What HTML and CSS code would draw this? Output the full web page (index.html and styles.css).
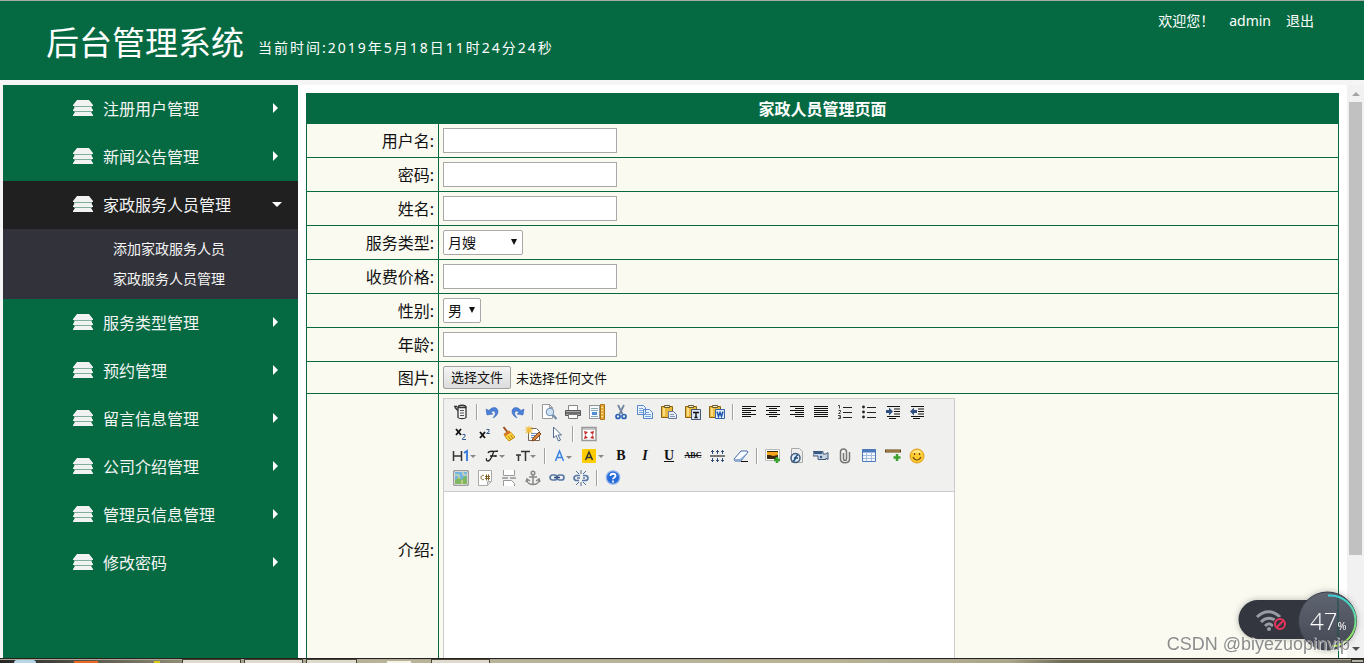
FILE: index.html
```html
<!DOCTYPE html>
<html lang="zh-CN">
<head>
<meta charset="utf-8">
<title>后台管理系统</title>
<link rel="stylesheet" href="styles.css">
</head>
<body>
<svg class="sprite" aria-hidden="true">
  <symbol id="stack" viewBox="0 0 20 17"><path fill="#7fae98" d="M1 5h18v7H1z"/><path fill="#f2f2f2" d="M4 0h12l4 5v1H0V5zM2 7h16l2 3v1H0v-1zM2 12h16l2 3v1H0v-1z"/></symbol>
  <symbol id="clip" viewBox="0 0 16 16"><path d="M.5 2.500h11v11H.5z" fill="#e9b93c" stroke="#8a6414"/><path d="M2 4h2v8H2z" fill="#f9dc83"/><path d="M3.500 1.500h5v2h-5z" fill="#f5edc8" stroke="#6b5a2c"/></symbol>
</svg>
<header class="topbar">
  <h1 class="brand">后台管理系统</h1>
  <p class="clock">当前时间:2019年5月18日11时24分24秒</p>
  <div class="user"><span class="hello">欢迎您！</span><span>admin</span><a href="#">退出</a></div>
</header>
<main class="layout">
  <nav class="menu">
    <a class="item" href="#"><svg class="stack"><use href="#stack"/></svg><span>注册用户管理</span><i class="arrow"></i></a>
    <a class="item" href="#"><svg class="stack"><use href="#stack"/></svg><span>新闻公告管理</span><i class="arrow"></i></a>
    <a class="item open" href="#"><svg class="stack"><use href="#stack"/></svg><span>家政服务人员管理</span><i class="arrow"></i></a>
    <div class="submenu"><a href="#">添加家政服务人员</a><a href="#">家政服务人员管理</a></div>
    <a class="item" href="#"><svg class="stack"><use href="#stack"/></svg><span>服务类型管理</span><i class="arrow"></i></a>
    <a class="item" href="#"><svg class="stack"><use href="#stack"/></svg><span>预约管理</span><i class="arrow"></i></a>
    <a class="item" href="#"><svg class="stack"><use href="#stack"/></svg><span>留言信息管理</span><i class="arrow"></i></a>
    <a class="item" href="#"><svg class="stack"><use href="#stack"/></svg><span>公司介绍管理</span><i class="arrow"></i></a>
    <a class="item" href="#"><svg class="stack"><use href="#stack"/></svg><span>管理员信息管理</span><i class="arrow"></i></a>
    <a class="item" href="#"><svg class="stack"><use href="#stack"/></svg><span>修改密码</span><i class="arrow"></i></a>
  </nav>
  <form class="content">
    <table class="form">
      <thead><tr><th class="title" colspan="2">家政人员管理页面</th></tr></thead>
      <tbody>
      <tr><th class="label"><label for="user">用户名:</label></th><td><input class="text" id="user" type="text"></td></tr>
      <tr><th class="label"><label for="pass">密码:</label></th><td><input class="text" id="pass" type="text"></td></tr>
      <tr><th class="label"><label for="name">姓名:</label></th><td><input class="text" id="name" type="text"></td></tr>
      <tr><th class="label"><label for="type">服务类型:</label></th><td><span class="pick wide"><select id="type"><option>月嫂</option></select></span></td></tr>
      <tr><th class="label"><label for="price">收费价格:</label></th><td><input class="text" id="price" type="text"></td></tr>
      <tr><th class="label"><label for="sex">性别:</label></th><td><span class="pick"><select id="sex"><option>男</option></select></span></td></tr>
      <tr><th class="label"><label for="age">年龄:</label></th><td><input class="text" id="age" type="text"></td></tr>
      <tr><th class="label"><label for="photo">图片:</label></th><td><div class="file"><input id="photo" type="file"><label class="choose" for="photo">选择文件</label><span>未选择任何文件</span></div></td></tr>
      <tr><th class="label"><label for="intro">介绍:</label></th><td>
        <div class="editor">
          <div class="tools">
            <div class="row">
              <button type="button" class="tool" aria-label="HTML代码"><svg viewBox="0 0 16 16"><path d="M5 3.500h8v10c-1 1.500-7 1.500-8 0z" fill="#f4f4f4" stroke="#333" stroke-width="1.300"/><path d="M7 6.500h4M7 9h4M7 11.500h4" stroke="#555"/><path d="M1 2.500h3M2 3.500l3 3M5 3.500c0-3 8-3 8 0" fill="none" stroke="#333" stroke-width="1.500"/></svg></button><i class="sep"></i>
              <button type="button" class="tool" aria-label="后退"><svg viewBox="0 0 16 16"><path d="M4 6.500c4-5 9-3 9 1 0 3-2 5-5 6.500 2-3 3-4 2-6-1-2-3-1-4 1l2 1-6 1-1-6z" fill="#4b80d8" stroke="#2859ae" stroke-width=".5"/></svg></button>
              <button type="button" class="tool" aria-label="前进"><svg viewBox="0 0 16 16"><path d="M12 6.500c-4-5-9-3-9 1 0 3 2 5 5 6.500-2-3-3-4-2-6 1-2 3-1 4 1l-2 1 6 1 1-6z" fill="#4b80d8" stroke="#2859ae" stroke-width=".5"/></svg></button><i class="sep"></i>
              <button type="button" class="tool" aria-label="预览"><svg viewBox="0 0 16 16"><path d="M1.500.5h7l3 3v11h-10z" fill="#fff" stroke="#999"/><path d="M8.500.5v3h3" fill="none" stroke="#999"/><circle cx="9" cy="8" r="3.800" fill="#cfe2f5" stroke="#6d8db3"/><path d="M12 11l3.500 4" stroke="#7189a6" stroke-width="2"/></svg></button>
              <button type="button" class="tool" aria-label="打印"><svg viewBox="0 0 16 16"><path d="M3.500 1.500h9v5h-9z" fill="#fff" stroke="#888"/><path d="M.5 6.500h15v5H.5z" fill="#aaa" stroke="#555"/><path d="M1 9h14" stroke="#333"/><path d="M3.500 10.500h9v4h-9z" fill="#fff" stroke="#777"/></svg></button>
              <button type="button" class="tool" aria-label="插入模板"><svg viewBox="0 0 16 16"><path d="M.5 1.500h10v13H.5z" fill="#f5f9ff" stroke="#333" stroke-dasharray="1 1"/><path d="M2 4.500h7M2 6.500h7M2 12.500h7" stroke="#8aa"/><path d="M3 8h5v3H3z" fill="#4d8fd4"/><path d="M11.500.5h4v15h-4z" fill="#e6a93a" stroke="#ad7410"/><path d="M12 3.500h2M12 6.500h2M12 9.500h2M12 12.500h2" stroke="#ffe29a"/></svg></button>
              <button type="button" class="tool" aria-label="剪切"><svg viewBox="0 0 16 16"><path d="M5 1l4.500 9M11 1L6.500 10" stroke="#7487a2" stroke-width="1.800"/><circle cx="5" cy="12.500" r="2" fill="none" stroke="#2b62b4" stroke-width="1.700"/><circle cx="11" cy="12.500" r="2" fill="none" stroke="#2b62b4" stroke-width="1.700"/></svg></button>
              <button type="button" class="tool" aria-label="复制"><svg viewBox="0 0 16 16"><path d="M.5 1.500h6l2 2v7h-8zM6.500 5.500h6l3 3v6h-9z" fill="#e9f2ff" stroke="#5586cc"/><path d="M2 4.500h4M2 6.500h4M2 8.500h4M8 8.500h4M8 10.500h6M8 12.500h6" stroke="#7ba5dd"/></svg></button>
              <button type="button" class="tool" aria-label="粘贴"><svg viewBox="0 0 16 16"><use href="#clip"/><path d="M7.500 7.500h5l3 3v4h-8z" fill="#e8eef8" stroke="#64779a"/><path d="M9 10.500h4M9 12.500h5" stroke="#8396b5"/></svg></button>
              <button type="button" class="tool" aria-label="粘贴为无格式文本"><svg viewBox="0 0 16 16"><use href="#clip"/><path d="M6.500 5.500h9v10h-9z" fill="#dbe4f2" stroke="#42546f"/><path d="M8 8.500h6M11 8v6M9.500 13.500h3" stroke="#111" stroke-width="1.400"/></svg></button>
              <button type="button" class="tool" aria-label="从Word粘贴"><svg viewBox="0 0 16 16"><use href="#clip"/><path d="M6.500 5.500h9v9h-9z" fill="#e5f0ff" stroke="#3465a9"/><path d="M8 7.500l1.500 5 1.500-4 1.500 4 1.500-5" fill="none" stroke="#2157aa" stroke-width="1.500"/></svg></button><i class="sep"></i>
              <button type="button" class="tool" aria-label="左对齐"><svg viewBox="0 0 16 16"><path d="M1 2.500h14M1 4.500h9M1 6.500h14M1 8.500h9M1 10.500h14M1 12.500h9" stroke="#111"/></svg></button>
              <button type="button" class="tool" aria-label="居中"><svg viewBox="0 0 16 16"><path d="M1 2.500h14M4 4.500h8M1 6.500h14M4 8.500h8M1 10.500h14M4 12.500h8" stroke="#111"/></svg></button>
              <button type="button" class="tool" aria-label="右对齐"><svg viewBox="0 0 16 16"><path d="M1 2.500h14M6 4.500h9M1 6.500h14M6 8.500h9M1 10.500h14M6 12.500h9" stroke="#111"/></svg></button>
              <button type="button" class="tool" aria-label="两端对齐"><svg viewBox="0 0 16 16"><path d="M1 2.500h14M1 4.500h14M1 6.500h14M1 8.500h14M1 10.500h14M1 12.500h14" stroke="#111"/></svg></button>
              <button type="button" class="tool" aria-label="编号"><svg viewBox="0 0 16 16"><path d="M6 3.500h9M6 8.500h9M6 13.500h9" stroke="#222"/><path d="M1 1.500h1.500v3M1.500 6.500h2v1.500l-2 1.500h2M1 11.500h2.500v3H1M2 13h1" fill="none" stroke="#444"/></svg></button>
              <button type="button" class="tool" aria-label="项目符号"><svg viewBox="0 0 16 16"><path d="M6 3.500h9M6 8.500h9M6 13.500h9" stroke="#222"/><circle cx="2.500" cy="3" r="1.400" fill="#222"/><circle cx="2.500" cy="8" r="1.400" fill="#222"/><circle cx="2.500" cy="13" r="1.400" fill="#222"/></svg></button>
              <button type="button" class="tool" aria-label="增加缩进"><svg viewBox="0 0 16 16"><path d="M2 2.500h13M9 5h6M9 7.500h6M9 10h6M2 12.500h13M4 14.500h7" stroke="#111"/><path d="M1 6h3V3.500L8 7.500l-4 4V9H1z" fill="#30517f"/></svg></button>
              <button type="button" class="tool" aria-label="减少缩进"><svg viewBox="0 0 16 16"><path d="M2 2.500h13M9 5h6M9 7.500h6M9 10h6M2 12.500h13M4 14.500h7" stroke="#111"/><path d="M8 6H5V3.500L1 7.500l4 4V9h3z" fill="#30517f"/></svg></button>
            </div>
            <div class="row">
              <button type="button" class="tool" aria-label="下标"><svg viewBox="0 0 16 16"><path d="M3 3l5 6M8 3L3 9" stroke="#111" stroke-width="1.800"/><path d="M9.500 8.500h2.500v2l-2.500 2v1h3.500" fill="none" stroke="#2e5a8e"/></svg></button>
              <button type="button" class="tool" aria-label="上标"><svg viewBox="0 0 16 16"><path d="M3 6l5 6M8 6l-5 6" stroke="#111" stroke-width="1.800"/><path d="M9.500 3.500h2.500v2l-2.500 2h3.500" fill="none" stroke="#2e5a8e"/></svg></button>
              <button type="button" class="tool" aria-label="清理格式"><svg viewBox="0 0 16 16"><path d="M2.500 1l4 5" stroke="#a04f1c" stroke-width="2"/><path d="M3 8l5-3c2 1 4 4 6 6l-6 4c-2-2-4-4-5-7z" fill="#f9d23c" stroke="#c58c10"/><path d="M3.500 8l4.500-3 1.500 1.500-5 3.500z" fill="#d86933"/><path d="M7 10l3 4M9.500 9l2.500 3.500" stroke="#b58416"/></svg></button>
              <button type="button" class="tool" aria-label="一键排版"><svg viewBox="0 0 16 16"><path d="M3.500 2.500h8l3 3v9h-11z" fill="#fff" stroke="#776655"/><path d="M6 7.500h7M6 9.500h5M6 11.500h4" stroke="#6b92c3"/><path d="M4 0v8M0 4h8M1 1l6 6M7 1L1 7" stroke="#f2bd36" stroke-width="1.200"/><path d="M14 6l2 2-6 6-3 1 1-3z" fill="#d9843e" stroke="#864722"/></svg></button>
              <button type="button" class="tool" aria-label="全选"><svg viewBox="0 0 16 16"><path d="M4.500 1v11L7 9.500 9.500 15l2-1L9 9h3.500z" fill="#fff" stroke="#536d92"/></svg></button><i class="sep"></i>
              <button type="button" class="tool" aria-label="全屏显示"><svg viewBox="0 0 16 16"><path d="M1 1.500h14v13H1z" fill="#fff" stroke="#999" stroke-width="1.500"/><path d="M1 3h14" stroke="#999"/><path d="M3 5l4 1-3 3zM13 5L9 6l3 3zM3 13l4-1-3-3zM13 13l-4-1 3-3z" fill="#c62d2d"/></svg></button>
            </div>
            <div class="row">
              <button type="button" class="tool head" aria-label="段落"><svg viewBox="0 0 26 16"><path d="M1.500 3v10M9.500 3v10M2 8h7" stroke="#333" stroke-width="1.500"/><path d="M12 5l3-2v10" fill="none" stroke="#3077d8" stroke-width="1.800"/><path d="M18 7h6l-3 3z" fill="#888"/></svg></button>
              <button type="button" class="tool drop" aria-label="字体"><svg viewBox="0 0 26 16"><path d="M5 5c1-3 6-1 10-2M11 3c-2 5-3 10-6 10-2 0-2-2-1-2.500M7 8h6M13 7v2" fill="none" stroke="#222" stroke-width="1.300"/><path d="M16 7h6l-3 3z" fill="#888"/></svg></button>
              <button type="button" class="tool drop" aria-label="文字大小"><svg viewBox="0 0 26 16"><path d="M3 7h5M5.500 7v6M8 3.500h9M12.500 3v10" stroke="#333" stroke-width="1.500"/><path d="M17 7h6l-3 3z" fill="#888"/></svg></button><i class="sep"></i>
              <button type="button" class="tool drop" aria-label="文字颜色"><svg viewBox="0 0 26 16"><path d="M4.500 13l4-10 4 10M6 9.500h5" fill="none" stroke="#3983e5" stroke-width="1.500"/><path d="M15 8h6l-3 3z" fill="#888"/></svg></button>
              <button type="button" class="tool drop" aria-label="文字背景"><svg viewBox="0 0 26 16"><rect x="1" y="1" width="14" height="14" rx="1" fill="#fc0"/><path d="M4.500 12L8 4l3.500 8M5.500 9.500h5" fill="none" stroke="#333" stroke-width="1.500"/><path d="M17 7h6l-3 3z" fill="#888"/></svg></button>
              <button type="button" class="tool glyph bold">B</button>
              <button type="button" class="tool glyph italic">I</button>
              <button type="button" class="tool glyph under">U</button>
              <button type="button" class="tool glyph strike">ABC</button>
              <button type="button" class="tool" aria-label="行距"><svg viewBox="0 0 16 16"><path d="M1 8h15" stroke="#777" stroke-width="2"/><path d="M3.500 2v4M8.500 2v4M13.500 2v4M3.500 10v4M8.500 10v4M13.500 10v4M2 3.500h3M7 3.500h3M12 3.500h3M2 12.500h3M7 12.500h3M12 12.500h3" stroke="#314d7a"/></svg></button>
              <button type="button" class="tool" aria-label="删除格式"><svg viewBox="0 0 16 16"><path d="M1 11l7-8h6l1 1-7 9H2z" fill="#f8fbff" stroke="#426ba9"/><path d="M1 11h6l8-7-7 9H2z" fill="#8eacd5"/><path d="M8 13.500h7" stroke="#111"/></svg></button><i class="sep"></i>
              <button type="button" class="tool" aria-label="图片"><svg viewBox="0 0 16 16"><path d="M.5 1.500h14v11H.5z" fill="#fff" stroke="#bbb"/><path d="M2 3h11v8H2z" fill="#f4a51c"/><path d="M2 3h11v1H2zM2 7h3l3 1 5-1v4H2z" fill="#3a2a12"/><path d="M12 9v6M9 12h6" stroke="#3aa12f" stroke-width="2.500"/></svg></button>
              <button type="button" class="tool" aria-label="Flash"><svg viewBox="0 0 16 16"><path d="M2.500.5h8l3 3v11h-11z" fill="#eee" stroke="#aaa"/><circle cx="6.500" cy="10" r="4.500" fill="#dce9f5" stroke="#3d5a79" stroke-width="1.500"/><path d="M9 7c-3 0-2 6-5 6M5 10h4" fill="none" stroke="#254e7d" stroke-width="1.500"/></svg></button>
              <button type="button" class="tool" aria-label="视音频"><svg viewBox="0 0 16 16"><path d="M0 3.500h10V6h3l2-1.500v7L13 10v1.500H5V8H0z" fill="#c8d4e2" stroke="#405a78"/><path d="M1 5h8" stroke="#345a89" stroke-width="2"/><circle cx="8" cy="9" r="1.200" fill="#345a89"/></svg></button>
              <button type="button" class="tool" aria-label="插入文件"><svg viewBox="0 0 16 16"><path d="M6.500 5v6c0 2 3 2 3 0V4c0-4-6-4-6 0v7c0 5 9 5 9 0V4" fill="none" stroke="#777" stroke-width="1.500"/></svg></button>
              <button type="button" class="tool" aria-label="表格"><svg viewBox="0 0 16 16"><path d="M1.500 1.500h13v12h-13z" fill="#f4f8ff" stroke="#4c78bc"/><path d="M1 3h14" stroke="#4c78bc" stroke-width="3"/><path d="M2 7.500h12M2 10.500h12M5.500 4v9M10.500 4v9" stroke="#a6bddf"/></svg></button>
              <button type="button" class="tool" aria-label="横线"><svg viewBox="0 0 16 16"><path d="M0 3h16" stroke="#5d4316" stroke-width="3"/><path d="M1 3h14" stroke="#d8ae61"/><path d="M12 6v7M8.500 9.500h7" stroke="#3aa12f" stroke-width="2.500"/></svg></button>
              <button type="button" class="tool" aria-label="表情"><svg viewBox="0 0 16 16"><circle cx="8" cy="8" r="7" fill="#fccb30" stroke="#e39b1d"/><path d="M3 5c2-4 8-4 10 0" fill="#ffe681"/><path d="M5.500 5v2M10.500 5v2M4 9c2 4 6 4 8 0" fill="none" stroke="#704511" stroke-width="1.200"/></svg></button>
            </div>
            <div class="row">
              <button type="button" class="tool" aria-label="地图"><svg viewBox="0 0 16 16"><path d="M.8.8h14.400v14.400H.8z" fill="#fff" stroke="#777"/><path d="M2 2h12v12H2z" fill="#72b5e7"/><path d="M2 10l4-3 3 3 2-4 3 1v7H2z" fill="#7fb765"/><path d="M2 5h4v4M10 2v3h4M9 10v4" fill="none" stroke="#f3e394"/></svg></button>
              <button type="button" class="tool" aria-label="插入程序代码"><svg viewBox="0 0 16 16"><path d="M1.500.5h13v11l-4 4h-9z" fill="#fff" stroke="#aaa"/><path d="M7 5.500C3 4 3 11 7 9.500M9.500 4.500v6M11.500 4.500v6M8 6.500h5M8 8.500h5" fill="none" stroke="#81601f"/><path d="M10.500 15v-3.500H14" fill="#ddd" stroke="#aaa"/></svg></button>
              <button type="button" class="tool" aria-label="插入分页符"><svg viewBox="0 0 16 16"><path d="M2.500 0v5.500h11V0M2.500 16v-5.500h8l3 3V16" fill="#fff" stroke="#999"/><path d="M1 8h6M9 8h6" stroke="#aaa" stroke-width="2"/></svg></button>
              <button type="button" class="tool" aria-label="锚点"><svg viewBox="0 0 16 16"><circle cx="8" cy="3" r="1.800" fill="none" stroke="#888" stroke-width="1.500"/><path d="M8 5v10M4 7h8M2 10c0 3 3 4.500 6 4.500s6-1.500 6-4.500M1 12l1-3 3 2M15 12l-1-3-3 2" fill="none" stroke="#888" stroke-width="1.500"/></svg></button>
              <button type="button" class="tool" aria-label="超级链接"><svg viewBox="0 0 16 16"><rect x="1" y="5" width="7" height="5" rx="2.500" fill="none" stroke="#5878a8" stroke-width="1.700"/><rect x="8" y="5" width="7" height="5" rx="2.500" fill="none" stroke="#5878a8" stroke-width="1.700"/><path d="M5 7.500h6" stroke="#344f79" stroke-width="1.500"/></svg></button>
              <button type="button" class="tool" aria-label="取消超级链接"><svg viewBox="0 0 16 16"><path d="M7 5.500H4c-4 0-4 5 0 5h2M10 5.500h2c4 0 4 5 0 5H9M4 8h3M10 8h2" fill="none" stroke="#5878a8" stroke-width="1.700"/><path d="M8 0v4M3 1l3 3M13 1l-3 3M8 12v4M3 15l3-3M13 15l-3-3" stroke="#526d94"/></svg></button><i class="sep"></i>
              <button type="button" class="tool" aria-label="关于"><svg viewBox="0 0 16 16"><circle cx="8" cy="7.500" r="6.700" fill="#286bdd" stroke="#8eb2ea" stroke-width="1.300"/><path d="M5.500 6c0-3 5-3 5 0 0 1.500-2.500 1.500-2.500 3.200M8 10.500v2" fill="none" stroke="#fff" stroke-width="1.800"/></svg></button>
            </div>
          </div>
          <textarea id="intro"></textarea>
        </div>
      </td></tr>
      </tbody>
    </table>
  </form>
  <div class="scroll" aria-hidden="true"><i class="up"></i><i class="thumb"></i><i class="down"></i></div>
</main>
<footer class="taskbar"><i class="orb"></i><i class="orange"></i><i class="yellow"></i><i class="win first"></i><i class="win"></i><i class="win short"></i><i class="light"></i><i class="win"></i><i class="desk"></i></footer>
<aside class="meter">
  <svg viewBox="0 0 120 62"><defs><linearGradient id="disc" x2="0" y2="1"><stop stop-color="#606572"/><stop offset="1" stop-color="#444854"/></linearGradient><linearGradient id="ring" x2="0" y2="1"><stop stop-color="#37d5d8"/><stop offset="1" stop-color="#a8e94b"/></linearGradient></defs>
    <path d="M20 10h65v39H20a19.500 19.500 0 010-39z" fill="#33353f"/>
    <g fill="none" stroke="#9a9ca3" stroke-width="3"><path d="M19 27c7-7 16-7 23 0M23 32c5-5 11-5 16 0M27 36c3-3 5-3 8 0"/></g><circle cx="31" cy="39" r="2" fill="#9a9ca3"/>
    <circle cx="42" cy="34" r="7" fill="#33353f"/><circle cx="42" cy="34" r="5" fill="none" stroke="#e9345b" stroke-width="2"/><path d="M38.500 37.500l7-7" stroke="#e9345b" stroke-width="2"/>
    <circle cx="89.500" cy="31" r="29" fill="url(#disc)" stroke="#3a3d47"/><path d="M100 5v52" stroke="#174f42"/>
    <path d="M90 5.500a25.500 25.500 0 014 51" fill="none" stroke="url(#ring)" stroke-width="2"/></svg>
  <span class="value">47<small>%</small></span>
</aside>
<p class="mark">CSDN @biyezuopinvip</p>
</body>
</html>
```

FILE: styles.css
```css
* { box-sizing: border-box; }
body {
  margin: 0; height: 100vh; display: flex; flex-direction: column; overflow: hidden;
  background: #f5f5f5; color: #111;
  font-family: "Noto Sans", "Noto Sans CJK SC", sans-serif; font-size: 16px;
}
a { color: inherit; text-decoration: none; }
p, h1 { margin: 0; }
.sprite { position: absolute; width: 0; height: 0; }

.topbar {
  flex: none; display: flex; align-items: flex-start; height: 80px; padding: 10px 50px 0 46px;
  border-top: 1px solid #aaa; background: #056a42; color: #fff;
}
.brand { margin-top: 8px; font-size: 33px; font-weight: 400; line-height: 48px; }
.clock { margin: 27px 0 0 14px; font-size: 14px; line-height: 20px; letter-spacing: 2px; }
.user { display: flex; gap: 15px; margin-left: auto; font-size: 14px; line-height: 20px; }

.layout { flex: 1; min-height: 0; display: flex; margin-top: 5px; background: #fff; overflow: hidden; }
.menu { flex: none; width: 298px; border-left: 3px solid #f5f5f5; background: #056a42; color: #f5f5f5; }
.item { display: flex; align-items: center; height: 48px; padding: 0 16px 2px 70px; }
.item .stack { width: 20px; height: 17px; margin-right: 10px; }
.arrow { margin-left: auto; margin-right: 4px; border: 5px solid transparent; border-left: 5px solid #fff; border-right: 0; }
.open { background: #202020; }
.open .arrow { margin-right: 0; border: 5px solid transparent; border-top-color: #fff; border-bottom: 0; }
.submenu { padding: 5px 0 5px 110px; background: #32323a; font-size: 14px; line-height: 30px; }
.submenu a { display: block; }

.content { flex: 1; min-width: 0; padding: 8px 8px 0; overflow: hidden; }
.form { width: 100%; border-collapse: collapse; background: #fafaf0; }
.form th, .form td { padding: 4px; border: 1px solid #056a42; }
.form .title { height: 30px; padding: 0; background: #056a42; color: #fff; font-weight: 700; line-height: 24px; }
.form .label { width: 132px; padding-top: 0; padding-bottom: 0; text-align: right; font-weight: 400; line-height: 24px; }
.text { display: block; width: 174px; height: 25px; padding: 1px 4px; border: 1px solid #a9a9a9; background: #fff; font: inherit; font-size: 13px; }
.pick { position: relative; display: block; width: 38px; }
.wide { width: 80px; }
.pick select {
  display: block; width: 100%; height: 25px; padding: 0 4px; appearance: none;
  border: 1px solid #a9a9a9; border-radius: 2px; background: #fff; color: #111;
  font-family: inherit; font-size: 14px;
}
.pick::after { content: ""; position: absolute; right: 6px; top: 9px; border: 3px solid transparent; border-top: 6px solid #111; border-bottom: 0; }
.file { display: flex; align-items: center; gap: 5px; font-size: 13px; }
.file input { position: absolute; width: 1px; height: 1px; opacity: 0; }
.choose { height: 23px; padding: 0 7px; border: 1px solid #a0a0a0; border-radius: 2px; background: linear-gradient(#f4f4f4, #dcdcdc); line-height: 21px; }

.editor { width: 512px; border: 1px solid #ccc; background: #fff; }
.tools { padding: 2px 5px; border-bottom: 1px solid #ccc; background: #f0f0ee; }
.row { display: flex; align-items: center; height: 22px; }
.tool { display: grid; place-items: center; width: 24px; height: 20px; padding: 0; border: 0; background: none; color: #111; }
.tool svg { display: block; width: 16px; height: 16px; }
.head { width: 32px; }
.drop { width: 30px; }
.head svg, .drop svg { width: 26px; }
.glyph { font-family: "Liberation Serif", serif; font-size: 14px; line-height: 16px; }
.bold { font-weight: 700; }
.italic { font-style: italic; font-weight: 700; }
.under { font-weight: 700; text-decoration: underline; }
.strike { font-size: 8px; font-weight: 700; text-decoration: line-through; }
.sep { width: 2px; height: 16px; margin: 0 3px; border-left: 1px solid #a0a0a0; border-right: 1px solid #fff; }
.editor textarea { display: block; width: 100%; height: 208px; border: 0; resize: none; font: inherit; }

.scroll { flex: none; display: flex; flex-direction: column; align-items: center; width: 17px; background: #f1f1f1; }
.up { margin: 7px 0 6px; border: 4px solid transparent; border-bottom-color: #a3a3a3; border-top: 0; }
.thumb { flex: none; width: 13px; height: 79%; background: #c1c1c1; }
.down { margin: auto 0 7px; border: 4px solid transparent; border-top-color: #505050; border-bottom: 0; }

.taskbar { flex: none; display: flex; align-items: flex-end; height: 5px; border-top: 1px solid #24221d; background: linear-gradient(90deg, #252525 0, #6d6a5b 9%, #9e9a80 15%, #b9b397 28%, #bab495 60%, #aaa688 74%, #706d58 78%, #68665a 100%); box-shadow: inset 0 1px #aaa798; }
.orb { width: 22px; height: 3px; margin-left: 14px; border-radius: 11px 11px 0 0; background: #b9d6e8; }
.orange { width: 24px; height: 2px; margin-left: 38px; background: #e96923; }
.yellow { width: 6px; height: 2px; margin-left: 56px; background: #d6c91c; }
.win { width: 59px; height: 4px; margin-right: 3px; border: 1px solid #444136; border-bottom: 0; background: #dedbce; }
.first { margin-left: 22px; }
.short { width: 51px; }
.light { width: 24px; height: 2px; margin: 0 20px 0 27px; background: #f4f2e8; }
.desk { width: 13px; height: 4px; margin-left: auto; border: 1px solid #38362f; background: #b4b2a7; }

.meter { position: fixed; right: 6px; bottom: 11px; width: 120px; height: 62px; color: #fff; filter: drop-shadow(0 0 3px #7778); }
.meter svg { display: block; width: 100%; height: 100%; }
.value { position: absolute; left: 72px; top: 15px; font-family: "Open Sans", sans-serif; font-size: 24px; font-weight: 300; line-height: 32px; }
.value small { font-size: 11px; font-weight: 400; }
.mark { position: fixed; right: 14px; bottom: 7px; color: #8c8c8c; font-family: "Liberation Sans", sans-serif; font-size: 18px; line-height: 24px; text-shadow: 1px 1px #fffb; }
```
